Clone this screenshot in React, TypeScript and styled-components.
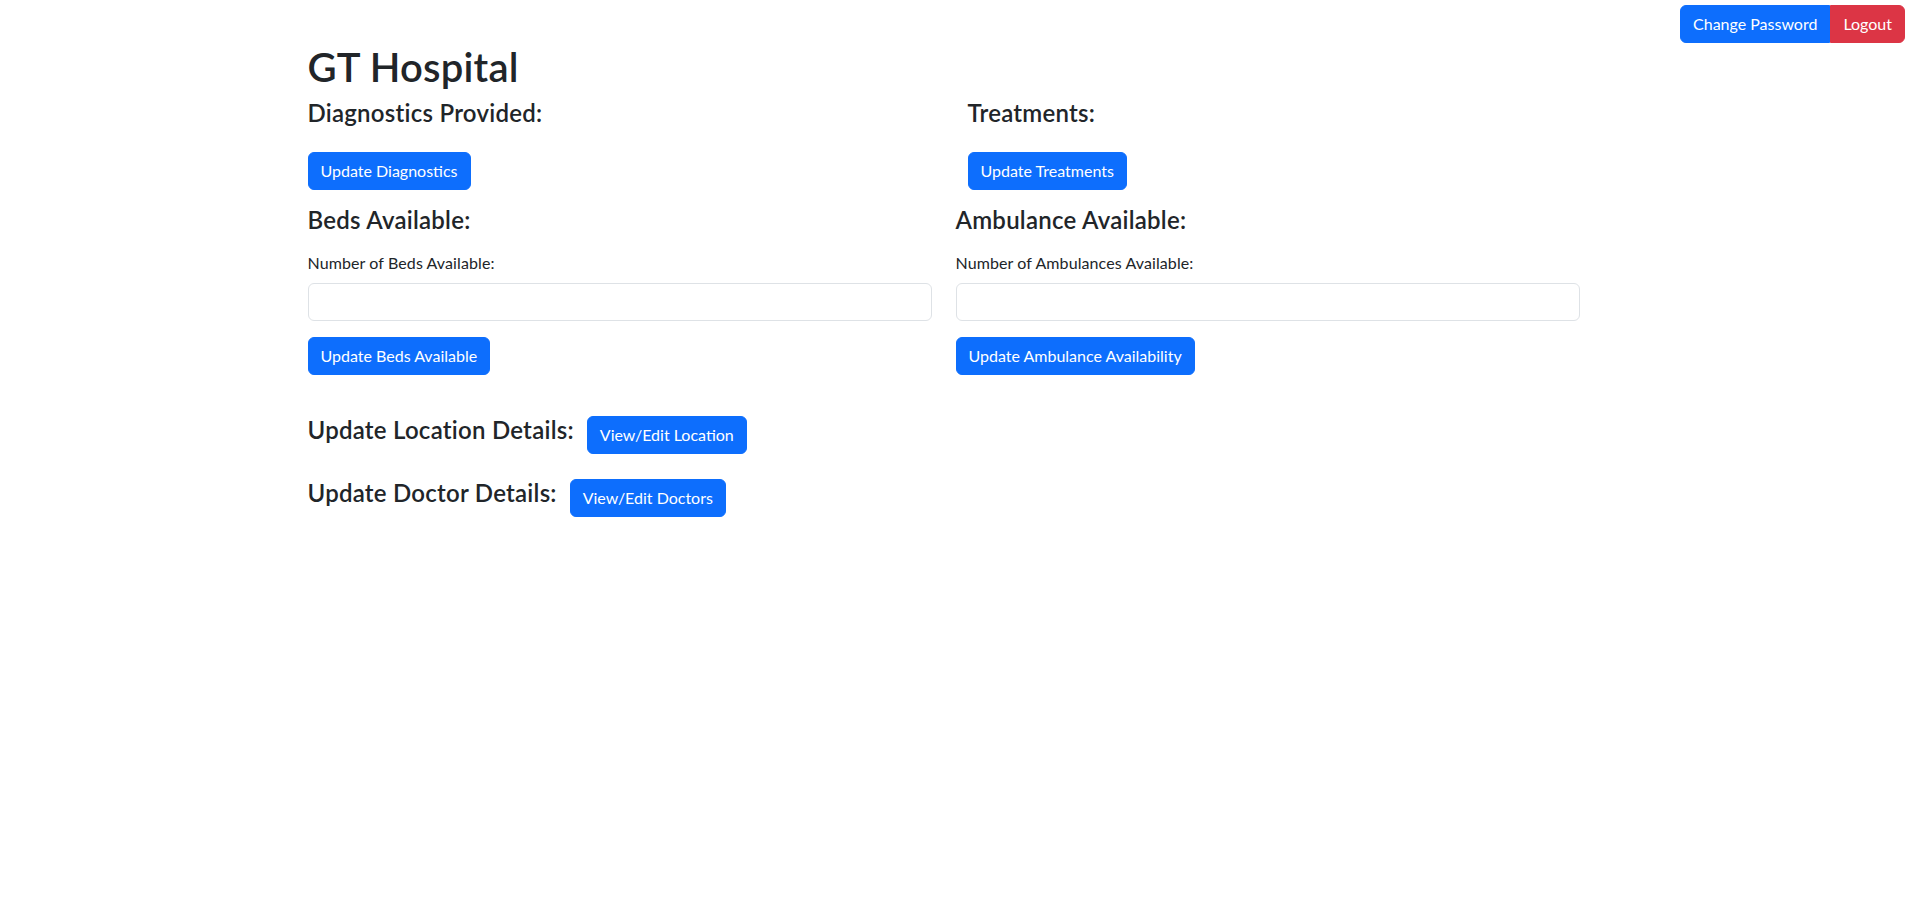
import React from 'react';
import styled, { createGlobalStyle } from 'styled-components';

const GlobalStyle = createGlobalStyle`
  body {
    margin: 0;
    background-color: #fff;
    color: #212529;
    font-family: Lato, "Liberation Sans", sans-serif;
    font-size: 16px;
    line-height: 1.5;
  }
  * {
    box-sizing: border-box;
  }
`;

const TopBar = styled.div`
  display: flex;
  justify-content: flex-end;
  padding: 5px 6px 0 0;
`;

const BtnGroup = styled.div`
  display: inline-flex;
`;

const Button = styled.button<{ $variant?: 'primary' | 'danger' }>`
  font-family: inherit;
  font-size: 16px;
  line-height: 24px;
  padding: 6px 12px;
  color: #fff;
  background-color: ${(props) => (props.$variant === 'danger' ? '#dc3545' : '#0d6efd')};
  border: 1px solid ${(props) => (props.$variant === 'danger' ? '#dc3545' : '#0d6efd')};
  border-radius: 6px;
  cursor: pointer;
  white-space: nowrap;
  align-self: flex-start;
  &:hover {
    opacity: 0.9;
  }
`;

const GroupButton = styled(Button)`
  border-radius: 0;
  &:first-child {
    border-radius: 6px 0 0 6px;
  }
  &:last-child {
    border-radius: 0 6px 6px 0;
  }
`;

const Container = styled.div`
  width: 1296px;
  margin: 0 auto;
`;

const Title = styled.h1`
  margin: 0 0 8px;
  font-size: 40px;
  line-height: 48px;
  font-weight: 600;
  letter-spacing: 0.2px;
`;

const SectionTitle = styled.h4<{ $gap?: number }>`
  margin: 0 0 ${(props) => props.$gap ?? 0}px;
  font-size: 24px;
  line-height: 28.8px;
  font-weight: 600;
  letter-spacing: 0.25px;
`;

const TopGrid = styled.div`
  display: grid;
  grid-template-columns: 660px 1fr;
  margin-bottom: 16px;
`;

const FormGrid = styled.div`
  display: grid;
  grid-template-columns: 624px 624px;
  column-gap: 24px;
`;

const Section = styled.div`
  display: flex;
  flex-direction: column;
`;

const Label = styled.label`
  margin-bottom: 8px;
  font-size: 16px;
  line-height: 24px;
  letter-spacing: 0.1px;
`;

const Input = styled.input`
  height: 38px;
  padding: 6px 12px;
  font-family: inherit;
  font-size: 16px;
  color: #212529;
  background-color: #fff;
  border: 1px solid #dee2e6;
  border-radius: 6px;
  margin-bottom: 16px;
`;

const DetailRows = styled.div`
  display: flex;
  flex-direction: column;
  gap: 25px;
  margin-top: 41px;
`;

const DetailRow = styled.div`
  display: flex;
  align-items: flex-start;
  gap: 13px;
`;

const App = () => (
  <>
    <GlobalStyle />
    <TopBar>
      <BtnGroup>
        <GroupButton>Change Password</GroupButton>
        <GroupButton $variant="danger">Logout</GroupButton>
      </BtnGroup>
    </TopBar>
    <Container>
      <Title>GT Hospital</Title>
      <TopGrid>
        <Section>
          <SectionTitle $gap={24}>Diagnostics Provided:</SectionTitle>
          <Button>Update Diagnostics</Button>
        </Section>
        <Section>
          <SectionTitle $gap={24}>Treatments:</SectionTitle>
          <Button>Update Treatments</Button>
        </Section>
      </TopGrid>
      <FormGrid>
        <Section>
          <SectionTitle $gap={16}>Beds Available:</SectionTitle>
          <Label htmlFor="beds">Number of Beds Available:</Label>
          <Input id="beds" type="number" />
          <Button>Update Beds Available</Button>
        </Section>
        <Section>
          <SectionTitle $gap={16}>Ambulance Available:</SectionTitle>
          <Label htmlFor="ambulances">Number of Ambulances Available:</Label>
          <Input id="ambulances" type="number" />
          <Button>Update Ambulance Availability</Button>
        </Section>
      </FormGrid>
      <DetailRows>
        <DetailRow>
          <SectionTitle>Update Location Details:</SectionTitle>
          <Button>View/Edit Location</Button>
        </DetailRow>
        <DetailRow>
          <SectionTitle>Update Doctor Details:</SectionTitle>
          <Button>View/Edit Doctors</Button>
        </DetailRow>
      </DetailRows>
    </Container>
  </>
);

export default App;
